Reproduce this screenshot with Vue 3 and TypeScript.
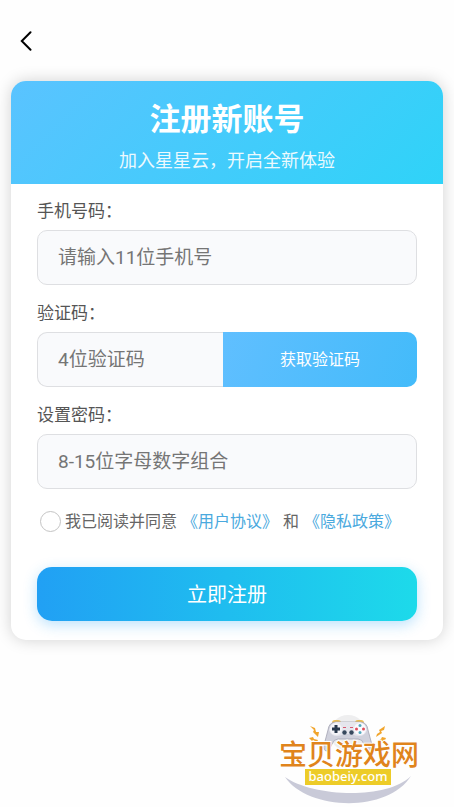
<script setup lang="ts">
import { ref } from 'vue'

const phone = ref<string>('')
const code = ref<string>('')
const password = ref<string>('')
const agreed = ref<boolean>(false)
</script>

<template>
  <div class="page">
    <nav class="topbar">
      <button class="back" type="button" aria-label="返回">
        <svg width="12" height="20" viewBox="0 0 12 20" fill="none" stroke="#000" stroke-width="2" stroke-linecap="round" stroke-linejoin="miter">
          <path d="M10.500 1.300 1.800 10l8.700 8.700" />
        </svg>
      </button>
    </nav>

    <main class="card">
      <header class="banner">
        <h1>注册新账号</h1>
        <p>加入星星云，开启全新体验</p>
      </header>

      <form class="form" @submit.prevent>
        <div class="field">
          <label for="phone">手机号码：</label>
          <input id="phone" v-model="phone" class="box" type="tel" placeholder="请输入11位手机号" />
        </div>
        <div class="field">
          <label for="code">验证码：</label>
          <div class="code-row">
            <input id="code" v-model="code" class="box code" type="text" placeholder="4位验证码" />
            <button class="get-code" type="button">获取验证码</button>
          </div>
        </div>
        <div class="field">
          <label for="password">设置密码：</label>
          <input id="password" v-model="password" class="box" type="password" placeholder="8-15位字母数字组合" />
        </div>

        <div class="agree">
          <input id="agree" v-model="agreed" type="checkbox" />
          <label for="agree">我已阅读并同意</label>
          <a href="#terms">《用户协议》</a>
          <span>和</span>
          <a href="#privacy">《隐私政策》</a>
        </div>

        <button class="submit" type="submit">立即注册</button>
      </form>
    </main>

    <footer class="brand">
      <svg width="144" height="92" viewBox="0 0 144 92">
        <circle cx="70" cy="19" r="18" fill="#eeeeef" />
        <g fill="#f1a52c">
          <path d="M32 12l5 2 1 4 3 0-1 5-5-5 1-2z" />
          <path d="M31 24l4-1 1 2 4 1-1 2-4-2-1 1z" />
          <path d="M107 12l-6 4 1 2-3 2-1 3 6-4-1-2 3-1z" />
          <path d="M108 24l-4-1-1 2-3 2 5 0 1 1z" />
        </g>
        <path d="M54 9q0-3 3-3h3q3 0 3 3zM77 9q0-3 3-3h3q3 0 3 3z" fill="#e9bd53" />
        <path d="M58 8h24q7 0 8 8l4 15q1 6-3 6-3-1-5-7-2-5-6-5H60q-4 0-6 5-2 6-5 7-4 0-3-6l4-15q1-8 8-8z" fill="#d0d1dc" stroke="#a5a5b4" stroke-width="0.800" />
        <path d="M58 8h24q5 1 7 8-2 6-8 6-4 0-7-2h-8q-3 2-7 2-6 0-8-6 2-7 7-8z" fill="#e6e6ed" />
        <circle cx="58" cy="15" r="6" fill="#f4f4f8" />
        <circle cx="82" cy="15" r="6" fill="#fafafe" />
        <path d="M56.500 11h3v2.500H62v3h-2.500V19h-3v-2.500H54v-3h2.500z" fill="#29394d" />
        <circle cx="82" cy="11.500" r="1.500" fill="#55a9be" />
        <circle cx="82" cy="18.500" r="1.500" fill="#55a9be" />
        <circle cx="78.500" cy="15" r="1.500" fill="#df4c5c" />
        <circle cx="85.500" cy="15" r="1.500" fill="#df4c5c" />
        <circle cx="66.500" cy="18.500" r="2.200" fill="#37485d" />
        <circle cx="73.500" cy="18.500" r="2.200" fill="#37485d" />
        <path d="M65 13h3v1h-3zM72 13h3v1h-3z" fill="#d65a72" />
        <path d="M7 63c26 19 100 24 126-1-24 38-104 34-126 1z" fill="#c9cad8" />
        <rect x="27" y="55" width="86" height="16" fill="#edcc28" />
        <text class="brand-name" x="71" y="51" text-anchor="middle">宝贝游戏网</text>
        <text class="brand-url" x="70" y="67" text-anchor="middle">baobeiy.com</text>
      </svg>
    </footer>
  </div>
</template>

<style>
body {
  background: #fff;
}
</style>

<style scoped>
.page {
  min-height: 100vh;
  box-sizing: border-box;
  display: flex;
  flex-direction: column;
  background: #fefefe;
  font-family: Roboto, "Noto Sans CJK SC", sans-serif;
  color: #555;
}
.page button,
.page input {
  font-family: inherit;
}
.topbar {
  height: 81px;
  padding: 0 16px;
  display: flex;
  align-items: center;
}
.back {
  display: flex;
  padding: 4px;
  border: 0;
  background: none;
}
.card {
  margin: 0 11px;
  border-radius: 15px;
  background: #fff;
  box-shadow: 0 0 16px rgba(0, 0, 0, 0.18);
  overflow: hidden;
}
.banner {
  padding: 17px 16px 10px;
  text-align: center;
  color: #fff;
  background: linear-gradient(135deg, #5ac3ff, #2fd3f8);
}
.banner h1 {
  margin: 0;
  font-size: 31px;
  line-height: 44px;
  font-weight: 700;
}
.banner p {
  margin: 6px 0 0;
  font-size: 18px;
  line-height: 26px;
  opacity: 0.9;
}
.form {
  padding: 15px 26px 19px;
}
.field {
  margin-bottom: 16px;
}
.field label {
  display: block;
  margin-bottom: 7px;
  font-size: 17px;
  line-height: 24px;
}
.box {
  display: block;
  width: 100%;
  height: 55px;
  box-sizing: border-box;
  padding: 0 20px;
  border: 1px solid #dedfe2;
  border-radius: 10px;
  background: #f9fafc;
  color: #555;
  font-size: 19px;
  outline: none;
}
.box::placeholder {
  color: #757575;
  opacity: 1;
}
.code-row {
  display: flex;
}
.code {
  flex: 1;
  min-width: 0;
  border-right: 0;
  border-radius: 10px 0 0 10px;
}
.get-code {
  flex: 0 0 51%;
  padding: 0 0 4px;
  border: 0;
  border-radius: 0 10px 10px 0;
  background: linear-gradient(110deg, #60bfff, #43bbfa);
  color: #fff;
  font-size: 16px;
}
.agree {
  display: flex;
  align-items: center;
  margin: 20px 0 33px;
  padding-left: 3px;
  font-size: 16px;
  line-height: 25px;
  white-space: nowrap;
  color: #666;
}
.agree input {
  appearance: none;
  flex: none;
  width: 21px;
  height: 21px;
  margin: 0 4px 0 0;
  border: 1px solid #c4c4c4;
  border-radius: 50%;
  background: #fff;
}
.agree input:checked {
  background: #4aa9e0;
}
.agree a {
  margin: 0 5px;
  color: #4aa9de;
  text-decoration: none;
}
.submit {
  display: block;
  width: 100%;
  height: 54px;
  padding: 0 0 2px;
  border: 0;
  border-radius: 15px;
  background: linear-gradient(90deg, #21a0f4, #1ddaea);
  box-shadow: 0 4px 14px rgba(33, 160, 244, 0.3);
  color: #fff;
  font-size: 20px;
}
.brand {
  display: flex;
  justify-content: flex-end;
  margin-top: auto;
  padding: 16px 32px 1px;
}
.brand-name {
  font-family: "Noto Sans CJK SC", sans-serif;
  font-size: 28px;
  font-weight: 500;
  fill: #e0841c;
  stroke: #fff;
  stroke-width: 2px;
  paint-order: stroke;
}
.brand-url {
  font-family: "Noto Sans", sans-serif;
  font-size: 13px;
  font-weight: 500;
  fill: #fff;
}
</style>
